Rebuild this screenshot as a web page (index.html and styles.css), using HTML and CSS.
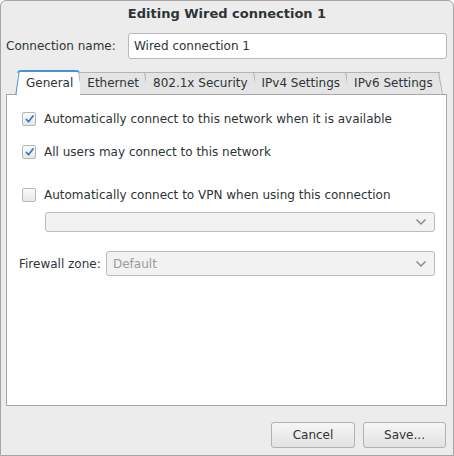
FILE: index.html
```html
<!DOCTYPE html>
<html>
<head>
<meta charset="utf-8">
<link rel="stylesheet" href="styles.css">
</head>
<body>
<div class="window">
  <div class="titlebar">Editing Wired connection 1</div>
  <div class="namerow">
    <span class="label">Connection name:</span>
    <div class="entry">Wired connection 1</div>
  </div>
  <div class="tabs">
    <div class="tab active">General</div>
    <div class="tab">Ethernet</div>
    <div class="tab">802.1x Security</div>
    <div class="tab">IPv4 Settings</div>
    <div class="tab last">IPv6 Settings</div>
  </div>
  <div class="page">
    <div class="check-row r1">
      <span class="cb checked"><svg viewBox="0 0 14 14" width="14" height="14"><path d="M3 7.5 L5.8 10.5 L11.5 3" fill="none" stroke="#3d7ccc" stroke-width="2.2" stroke-linecap="round" stroke-linejoin="round"/></svg></span>
      <span>Automatically connect to this network when it is available</span>
    </div>
    <div class="check-row r2">
      <span class="cb checked"><svg viewBox="0 0 14 14" width="14" height="14"><path d="M3 7.5 L5.8 10.5 L11.5 3" fill="none" stroke="#3d7ccc" stroke-width="2.2" stroke-linecap="round" stroke-linejoin="round"/></svg></span>
      <span>All users may connect to this network</span>
    </div>
    <div class="check-row r3">
      <span class="cb"></span>
      <span>Automatically connect to VPN when using this connection</span>
    </div>
    <div class="combo vpn">
      <span class="ctext"></span>
      <svg class="arrow" viewBox="0 0 12 8" width="12" height="8"><path d="M1.5 1.5 L6 6 L10.5 1.5" fill="none" stroke="#8a8a8a" stroke-width="1.5"/></svg>
    </div>
    <div class="fwrow">
      <span class="label">Firewall zone:</span>
      <div class="combo fw">
        <span class="ctext dim">Default</span>
        <svg class="arrow" viewBox="0 0 12 8" width="12" height="8"><path d="M1.5 1.5 L6 6 L10.5 1.5" fill="none" stroke="#8a8a8a" stroke-width="1.5"/></svg>
      </div>
    </div>
  </div>
  <div class="buttons">
    <div class="btn">Cancel</div>
    <div class="btn">Save...</div>
  </div>
</div>
</body>
</html>
```
FILE: styles.css
```css
* { box-sizing: border-box; }
html, body { margin: 0; padding: 0; background: #ffffff; }
body {
  font-family: "DejaVu Sans", sans-serif;
  font-size: 12px;
  color: #2e3436;
}
.window {
  width: 454px;
  height: 456px;
  background: #ececec;
  border: 1px solid #a4a4a4;
  border-radius: 6px 6px 0 0;
  display: flex;
  flex-direction: column;
  overflow: hidden;
}
.titlebar {
  height: 26px;
  line-height: 25px;
  text-align: center;
  font-weight: bold;
  font-size: 13px;
  color: #2e3436;
}
.namerow {
  display: flex;
  align-items: center;
  padding: 5px 6px 0 5px;
  height: 32px;
}
.namerow .label { width: 122px; }
.entry {
  flex: 1;
  height: 26px;
  border: 1px solid #b8b8b8;
  border-radius: 3px;
  background: #fff;
  padding: 0 5px;
  line-height: 24px;
}
.tabs {
  display: flex;
  margin: 11px 0 0 16px;
  height: 24px;
  position: relative;
  z-index: 1;
}
.tab {
  position: relative;
  padding: 0 7px 0 7px;
  line-height: 21px;
  margin-top: 2px;
  color: #2e3436;
  background: #e4e4e4;
  border-top: 1px solid #b4b4b4;
}
.tab::after {
  content: "";
  position: absolute;
  right: -1px;
  top: 0;
  bottom: 0;
  width: 1px;
  background: #b0b0b0;
  transform: skewX(10deg);
}
.tab.active {
  background: #fff;
  margin-top: 0;
  line-height: 22px;
  height: 25px;
  padding: 0 7px 0 9px;
  border-top: 2px solid #4a90d9;
  border-radius: 4px 4px 0 0;
}
.tab.active::before {
  content: "";
  position: absolute;
  left: 0;
  top: -1px;
  bottom: 0;
  width: 1px;
  background: #4a90d9;
  transform: skewX(-8deg);
}
.page {
  margin: 0 6px 0 5px;
  height: 312px;
  background: #fff;
  border: 1px solid #a8a8a8;
  position: relative;
}
.check-row {
  display: flex;
  align-items: center;
  height: 16px;
  margin-left: 15px;
}
.r1 { margin-top: 16px; }
.r2 { margin-top: 17px; }
.r3 { margin-top: 27px; }
.cb {
  width: 14px;
  height: 14px;
  border: 1px solid #b6b6b6;
  border-radius: 2px;
  background: linear-gradient(#fafafa, #e8e8e8);
  margin-right: 8px;
  display: flex;
  align-items: center;
  justify-content: center;
  overflow: visible;
}
.cb svg { margin-top: -1px; margin-left: 1px; }
.combo {
  background: #f2f2f2;
  border: 1px solid #bcbcbc;
  border-radius: 3px;
  display: flex;
  align-items: center;
  justify-content: space-between;
  padding: 0 7px 0 6px;
}
.combo.vpn {
  margin: 9px 11px 0 38px;
  height: 20px;
}
.ctext.dim { color: #9a9a9a; }
.fwrow {
  display: flex;
  align-items: center;
  margin: 19px 11px 0 12px;
}
.fwrow .label { width: 87px; }
.combo.fw { flex: 1; height: 25px; }
.buttons {
  display: flex;
  justify-content: flex-end;
  gap: 8px;
  padding: 16px 7px 0 0;
}
.btn {
  width: 84px;
  height: 26px;
  border: 1px solid #b2b2b2;
  border-radius: 3px;
  background: linear-gradient(#f6f6f6, #e2e2e2);
  text-align: center;
  line-height: 24px;
  color: #2e3436;
}
.btn + .btn { width: 83px; }
```
